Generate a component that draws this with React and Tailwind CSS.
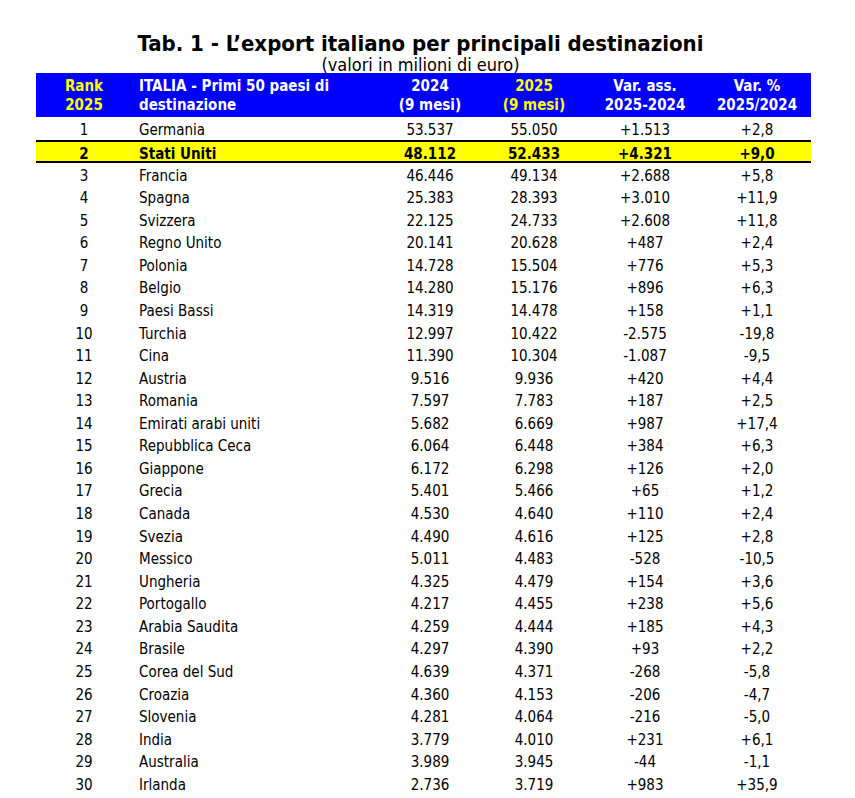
const rows = [
  ["1", "Germania", "53.537", "55.050", "+1.513", "+2,8"],
  ["2", "Stati Uniti", "48.112", "52.433", "+4.321", "+9,0"],
  ["3", "Francia", "46.446", "49.134", "+2.688", "+5,8"],
  ["4", "Spagna", "25.383", "28.393", "+3.010", "+11,9"],
  ["5", "Svizzera", "22.125", "24.733", "+2.608", "+11,8"],
  ["6", "Regno Unito", "20.141", "20.628", "+487", "+2,4"],
  ["7", "Polonia", "14.728", "15.504", "+776", "+5,3"],
  ["8", "Belgio", "14.280", "15.176", "+896", "+6,3"],
  ["9", "Paesi Bassi", "14.319", "14.478", "+158", "+1,1"],
  ["10", "Turchia", "12.997", "10.422", "-2.575", "-19,8"],
  ["11", "Cina", "11.390", "10.304", "-1.087", "-9,5"],
  ["12", "Austria", "9.516", "9.936", "+420", "+4,4"],
  ["13", "Romania", "7.597", "7.783", "+187", "+2,5"],
  ["14", "Emirati arabi uniti", "5.682", "6.669", "+987", "+17,4"],
  ["15", "Repubblica Ceca", "6.064", "6.448", "+384", "+6,3"],
  ["16", "Giappone", "6.172", "6.298", "+126", "+2,0"],
  ["17", "Grecia", "5.401", "5.466", "+65", "+1,2"],
  ["18", "Canada", "4.530", "4.640", "+110", "+2,4"],
  ["19", "Svezia", "4.490", "4.616", "+125", "+2,8"],
  ["20", "Messico", "5.011", "4.483", "-528", "-10,5"],
  ["21", "Ungheria", "4.325", "4.479", "+154", "+3,6"],
  ["22", "Portogallo", "4.217", "4.455", "+238", "+5,6"],
  ["23", "Arabia Saudita", "4.259", "4.444", "+185", "+4,3"],
  ["24", "Brasile", "4.297", "4.390", "+93", "+2,2"],
  ["25", "Corea del Sud", "4.639", "4.371", "-268", "-5,8"],
  ["26", "Croazia", "4.360", "4.153", "-206", "-4,7"],
  ["27", "Slovenia", "4.281", "4.064", "-216", "-5,0"],
  ["28", "India", "3.779", "4.010", "+231", "+6,1"],
  ["29", "Australia", "3.989", "3.945", "-44", "-1,1"],
  ["30", "Irlanda", "2.736", "3.719", "+983", "+35,9"],
];

const grid = "grid grid-cols-[96px_247px_102px_106px_116px_108px]";

export default function App() {
  return (
    <div
      className="w-[855px] h-[798px] bg-white overflow-hidden text-black"
      style={{ fontFamily: '"DejaVu Sans Condensed", "DejaVu Sans", sans-serif', fontStretch: "semi-condensed" }}
    >
      <div className="ml-[36px] w-[775px] pt-[31px]">
        <div className="text-center font-bold text-[22px] leading-[25px] ml-[-6px]">
          Tab. 1 - L’export italiano per principali destinazioni
        </div>
        <div className="text-center text-[18px] leading-[17px] ml-[-6px]">
          (valori in milioni di euro)
        </div>
        <div className={`${grid} bg-[#0000ff] font-bold text-[15px] leading-[19px] h-[44px] pt-[4px]`}>
          <div className="text-center text-[#ffff00]">Rank<br />2025</div>
          <div className="text-white pl-[7px]">ITALIA - Primi 50 paesi di<br />destinazione</div>
          <div className="text-center text-white">2024<br />(9 mesi)</div>
          <div className="text-center text-[#ffff00]">2025<br />(9 mesi)</div>
          <div className="text-center text-white">Var. ass.<br />2025-2024</div>
          <div className="text-center text-white">Var. %<br />2025/2024</div>
        </div>
        {rows.map((r, i) => {
          const hl = i === 1;
          return (
            <div
              key={r[0]}
              className={
                hl
                  ? `${grid} h-[23px] items-center text-[15px] font-bold bg-[#ffff00] border-y-2 border-black pt-[1px]`
                  : `${grid} h-[22.57px] items-center text-[15px] pt-[2px]`
              }
            >
              <div className="text-center">{r[0]}</div>
              <div className="pl-[7px] whitespace-nowrap">{r[1]}</div>
              <div className="text-center">{r[2]}</div>
              <div className="text-center">{r[3]}</div>
              <div className="text-center">{r[4]}</div>
              <div className="text-center">{r[5]}</div>
            </div>
          );
        })}
      </div>
    </div>
  );
}
